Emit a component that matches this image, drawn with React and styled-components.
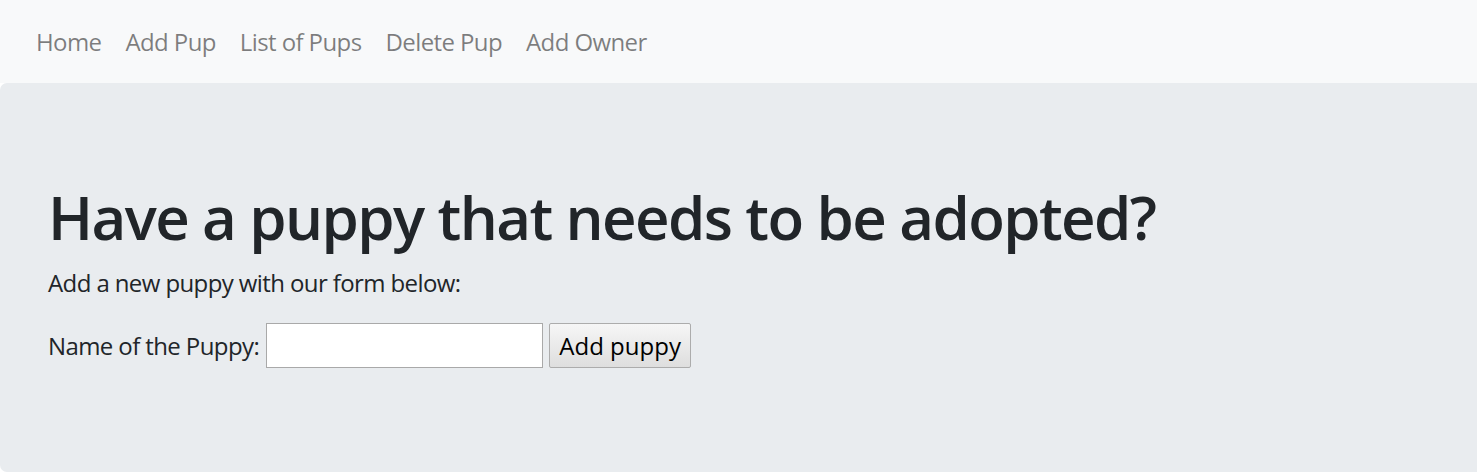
import React from "react";
import styled, { createGlobalStyle } from "styled-components";

const GlobalStyle = createGlobalStyle`
  html, body {
    margin: 0;
    padding: 0;
    background: #ffffff;
  }
  body {
    font-family: "Open Sans", "Noto Sans", sans-serif;
    font-size: 24px;
    line-height: 1.5;
    letter-spacing: -0.6px;
    color: #212529;
  }
  * { box-sizing: border-box; }
`;

const Navbar = styled.nav`
  display: flex;
  align-items: center;
  background: #f8f9fa;
  padding: 12px 24px;
  height: 83px;
`;

const NavLink = styled.a`
  display: block;
  padding: 0 12px;
  line-height: 36px;
  color: rgba(0, 0, 0, 0.5);
  text-decoration: none;
  cursor: pointer;
`;

const Jumbotron = styled.section`
  background: #e9ecef;
  padding: 96px 48px;
  border-radius: 7px 0 0 7px;
  margin-bottom: 3px;
`;

const Heading = styled.h1`
  margin: 0 0 12px;
  font-size: 60px;
  font-weight: 600;
  letter-spacing: -1.6px;
  line-height: 72px;
  padding-top: 2px;
  height: 72px;
`;

const Lead = styled.p`
  margin: 0 0 24px;
  line-height: 36px;
  padding-top: 2px;
  height: 36px;
`;

const Form = styled.form`
  display: flex;
  align-items: center;
  height: 45px;
  margin-bottom: 8px;
`;

const Label = styled.label`
  line-height: 36px;
  margin-right: 7px;
  white-space: nowrap;
`;

const Input = styled.input`
  width: 277px;
  height: 45px;
  border: 1px solid #a9a9a9;
  background: #fff;
  font: inherit;
  padding: 1px 3px;
  margin: 0 6px 0 0;
`;

const Button = styled.button`
  width: 142px;
  height: 45px;
  padding: 0 6px;
  margin: 0;
  font: inherit;
  white-space: nowrap;
  color: #000;
  background: linear-gradient(#f6f6f6, #dedede);
  border: 1px solid #acacac;
  border-radius: 2px;
`;

const links = ["Home", "Add Pup", "List of Pups", "Delete Pup", "Add Owner"];

export default function App() {
  return (
    <>
      <GlobalStyle />
      <Navbar>
        {links.map((l) => (
          <NavLink key={l}>{l}</NavLink>
        ))}
      </Navbar>
      <Jumbotron>
        <Heading>Have a puppy that needs to be adopted?</Heading>
        <Lead>Add a new puppy with our form below:</Lead>
        <Form onSubmit={(e) => e.preventDefault()}>
          <Label>Name of the Puppy:</Label>
          <Input type="text" />
          <Button type="submit">Add puppy</Button>
        </Form>
      </Jumbotron>
    </>
  );
}
